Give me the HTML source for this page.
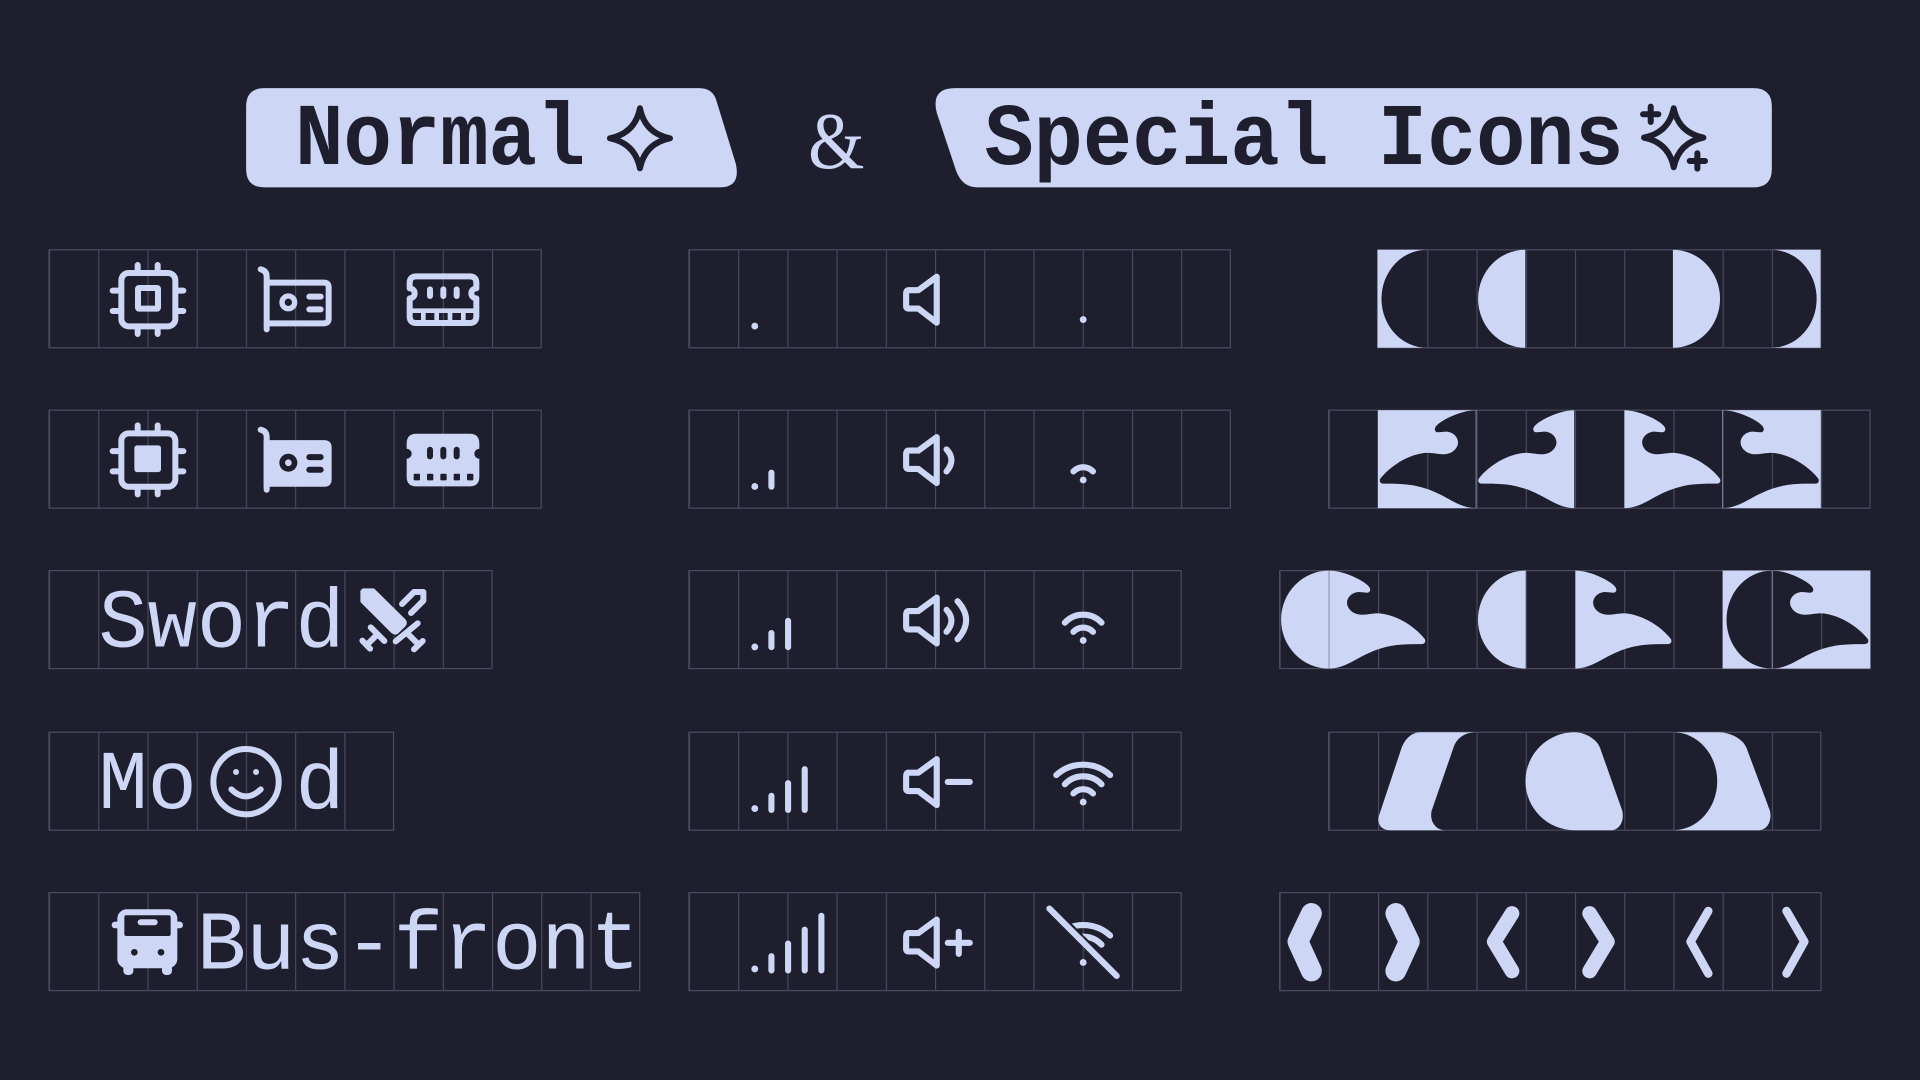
<!DOCTYPE html>
<html><head><meta charset="utf-8"><style>
html,body{margin:0;padding:0;background:#1e1e2e;overflow:hidden}
svg{display:block}
</style></head><body>
<svg width="1920" height="1080" viewBox="0 0 1568 882" xmlns="http://www.w3.org/2000/svg">
<defs>
<pattern id="gp" patternUnits="userSpaceOnUse" x="40" y="0" width="40.2" height="882">
<rect x="0" y="0" width="0.9" height="882" fill="#4a4b60"/>
</pattern>
<path id="w" d="M80,0 C74,0 66,2 58,6 C50,10 45,14 47,17 C48,19 52,17.5 56,17.5 C63,18 67,24 65,29 C63,34 58,36 53,36 C48,36 44,34.5 38,35 C22,37 8,48 2,56 C1,58 2,60 5,60 C15,60 26,60 36,63 C55,68 65,80 80,80 Z"/>
<mask id="m1" maskUnits="userSpaceOnUse" x="0" y="0" width="1568" height="882">
<rect x="0" y="0" width="1568" height="882" fill="#fff"/>
<use href="#w" transform="translate(1125.2,335)" fill="#000"/>
<use href="#w" transform="translate(1487,335) scale(-1,1)" fill="#000"/>
<path d="M1447,466 A37,40 0 0 0 1447,546 Z" fill="#000"/>
<use href="#w" transform="translate(1527.4,466) scale(-1,1)" fill="#000"/>
</mask>
<clipPath id="wc"><polygon points="821,700 918,797 960,797 960,700"/></clipPath>
</defs>
<rect width="1568" height="882" fill="#1e1e2e"/>

<!-- Titles -->
<path d="M216,72 H571 Q582,72 585,82 L601,134 Q605,153 588,153 H216 Q201,153 201,138 V87 Q201,72 216,72 Z" fill="#cdd6f4"/>
<path d="M1432,72 Q1447,72 1447,87 V138 Q1447,153 1432,153 H798 Q786,153 781,140 L765,92 Q760,72 780,72 Z" fill="#cdd6f4"/>
<g font-family="Liberation Mono, monospace" font-weight="bold" font-size="72" fill="#1e1e2e">
<text x="241" y="134" textLength="237" lengthAdjust="spacingAndGlyphs">Normal</text>
<text x="804" y="134" textLength="522" lengthAdjust="spacingAndGlyphs">Special Icons</text>
</g>
<text x="660" y="137" font-family="Liberation Serif, serif" font-size="66" fill="#cdd6f4" textLength="46" lengthAdjust="spacingAndGlyphs">&amp;</text>
<g transform="translate(481.8,65.3) scale(0.27222)" fill="none" stroke="#1e1e2e" stroke-width="18" stroke-linejoin="round" stroke-linecap="round">
<path d="M150,85 Q165,160 240,175 Q165,190 150,265 Q135,190 60,175 Q135,160 150,85 Z"/>
</g>
<g transform="translate(1306.7,65.3) scale(0.27222)" fill="none" stroke="#1e1e2e" stroke-width="18" stroke-linejoin="round" stroke-linecap="round">
<path d="M221,85 Q236,158 310,173 Q236,188 221,262 Q206,188 132,173 Q206,158 221,85 Z"/>
<path d="M152,80 V126 M129,103 H175 M292,220 V266 M269,243 H315"/>
</g>

<!-- Grids -->
<g fill="url(#gp)" stroke="#4a4b60" stroke-width="1">
<rect x="40" y="204" width="402" height="80"/>
<rect x="40" y="335" width="402" height="80"/>
<rect x="40" y="466" width="361.8" height="80"/>
<rect x="40" y="598" width="281.4" height="80"/>
<rect x="40" y="729" width="482.4" height="80"/>
<rect x="562.6" y="204" width="442.2" height="80"/>
<rect x="562.6" y="335" width="442.2" height="80"/>
<rect x="562.6" y="466" width="402" height="80"/>
<rect x="562.6" y="598" width="402" height="80"/>
<rect x="562.6" y="729" width="402" height="80"/>
<rect x="1125" y="204" width="361.8" height="80"/>
<rect x="1085" y="335" width="442.2" height="80"/>
<rect x="1045" y="466" width="482.4" height="80"/>
<rect x="1085" y="598" width="402" height="80"/>
<rect x="1045" y="729" width="442.2" height="80"/>
</g>

<!-- Left icons row1 (outline) -->
<g transform="translate(81.67,204.16) scale(0.27222)" fill="none" stroke="#cdd6f4" stroke-width="18" stroke-linecap="round" stroke-linejoin="round">
<rect x="64" y="69" width="162" height="160" rx="22"/>
<path d="M113,45 V69 M173,45 V69 M113,229 V252 M173,229 V252 M38,122 H64 M38,183 H64 M226,122 H250 M226,183 H250"/>
<rect x="114" y="114" width="60" height="62" rx="3"/>
<path d="M482,58 Q500,62 500,80 V238"/>
<path d="M500,98 H672 Q686,98 686,112 V206 Q686,220 672,220 H500"/>
<circle cx="565" cy="157" r="19" stroke-width="16"/>
<path d="M628,140 H662 M628,178 H662"/>
<path d="M949,79 H1109 Q1129,79 1129,99 V115 A15,15 0 0 0 1129,145 V199 Q1129,219 1109,219 H949 Q929,219 929,199 V145 A15,15 0 0 0 929,115 V99 Q929,79 949,79 Z"/>
<path d="M990,118 V138 M1030,118 V138 M1070,118 V138"/>
<path d="M929,182 H1129 M970,182 V219 M1010,182 V219 M1050,182 V219 M1090,182 V219" stroke-width="14"/>
</g>
<!-- Left icons row2 (filled) -->
<g transform="translate(81.67,335.16) scale(0.27222)" stroke-linecap="round" stroke-linejoin="round">
<g fill="none" stroke="#cdd6f4" stroke-width="18">
<rect x="64" y="69" width="162" height="160" rx="22"/>
<path d="M113,45 V69 M173,45 V69 M113,229 V252 M173,229 V252 M38,122 H64 M38,183 H64 M226,122 H250 M226,183 H250"/>
<path d="M482,58 Q500,62 500,80 V238"/>
</g>
<rect x="103" y="105" width="80" height="80" rx="8" fill="#cdd6f4"/>
<path d="M491,89 H672 Q695,89 695,112 V206 Q695,229 672,229 H491 Z" fill="#cdd6f4"/>
<circle cx="565" cy="157" r="27" fill="#1e1e2e"/>
<circle cx="565" cy="157" r="10" fill="#cdd6f4"/>
<path d="M628,140 H662 M628,178 H662" stroke="#1e1e2e" stroke-width="18"/>
<path d="M949,70 H1109 Q1138,70 1138,99 V115 A15,15 0 0 0 1138,145 V199 Q1138,228 1109,228 H949 Q920,228 920,199 V145 A15,15 0 0 0 920,115 V99 Q920,70 949,70 Z" fill="#cdd6f4"/>
<path d="M990,118 V138 M1030,118 V138 M1070,118 V138" stroke="#1e1e2e" stroke-width="18"/>
<g fill="#1e1e2e"><rect x="941" y="190" width="19" height="20" rx="3"/><rect x="981" y="190" width="19" height="20" rx="3"/><rect x="1021" y="190" width="19" height="20" rx="3"/><rect x="1061" y="190" width="19" height="20" rx="3"/><rect x="1101" y="190" width="19" height="20" rx="3"/></g>
</g>

<!-- Text labels -->
<g font-family="Liberation Mono, monospace" font-size="68" fill="#cdd6f4">
<text x="80.4" y="528" textLength="201" lengthAdjust="spacingAndGlyphs">Sword</text>
<text x="80.4" y="660" textLength="80.4" lengthAdjust="spacingAndGlyphs">Mo</text>
<text x="241.2" y="660" textLength="40.2" lengthAdjust="spacingAndGlyphs">d</text>
<text x="160.8" y="791" textLength="361.8" lengthAdjust="spacingAndGlyphs">Bus-front</text>
</g>
<!-- Sword icon -->
<g transform="translate(277.7,465.5) scale(0.27222)" stroke="#cdd6f4" stroke-linecap="round" stroke-linejoin="round">
<path d="M70,60 L100,60 L193,152 Q198,160 191,167 L172,186 Q165,192 157,185 L66,94 L66,64 Z" fill="#cdd6f4" stroke-width="10"/>
<g fill="none" stroke-width="18">
<path d="M92,172 L133,213 M112,193 L82,223 M67,212 L90,236"/>
<path d="M186,102 L222,66 L250,66 L250,92 L213,129"/>
<path d="M167,214 L233,160 M200,188 L235,223 M222,238 L248,213"/>
</g>
</g>
<!-- Smiley -->
<g transform="translate(155.2,596.2) scale(0.27222)" fill="none" stroke="#cdd6f4" stroke-width="18" stroke-linecap="round">
<circle cx="168" cy="155" r="98"/>
<path d="M124,178 Q168,220 212,178"/>
<circle cx="138" cy="126" r="9" fill="#cdd6f4" stroke="none"/>
<circle cx="198" cy="126" r="9" fill="#cdd6f4" stroke="none"/>
</g>
<!-- Bus -->
<g transform="translate(81.67,726.8) scale(0.27222)">
<rect x="35" y="95" width="30" height="20" rx="10" fill="#cdd6f4"/>
<rect x="219" y="95" width="30" height="20" rx="10" fill="#cdd6f4"/>
<rect x="70" y="215" width="30" height="40" rx="12" fill="#cdd6f4"/>
<rect x="186" y="215" width="30" height="40" rx="12" fill="#cdd6f4"/>
<rect x="52" y="58" width="180" height="177" rx="28" fill="#cdd6f4"/>
<rect x="73" y="76" width="139" height="62" rx="6" fill="#1e1e2e"/>
<path d="M122,97 H164" stroke="#cdd6f4" stroke-width="18" stroke-linecap="round"/>
<circle cx="103" cy="187" r="10" fill="#1e1e2e"/>
<circle cx="183" cy="187" r="10" fill="#1e1e2e"/>
</g>

<!-- Middle icons -->
<g fill="none" stroke="#cdd6f4" stroke-width="5" stroke-linecap="round" stroke-linejoin="round">
<path d="M630,386 V397.5"/>
<path d="M630,517 V528.5 M643.6,507 V528.5"/>
<path d="M630,649.9 V661.5 M643.6,639.6 V661.5 M657.2,628.2 V661.5"/>
<path d="M630,780.9 V792.5 M643.6,770.6 V792.5 M657.2,759.2 V792.5 M670.8,747.9 V792.5"/>
<path d="M765,226 L750,237 H742 Q740,237 740,240 V250 Q740,252 742,252 H750 L765,263.5 Z"/>
<path d="M765,357 L750,368 H742 Q740,368 740,371 V381 Q740,383 742,383 H750 L765,394.5 Z"/>
<path d="M765,488 L750,499 H742 Q740,499 740,502 V512 Q740,514 742,514 H750 L765,525.5 Z"/>
<path d="M765,620 L750,631 H742 Q740,631 740,634 V644 Q740,646 742,646 H750 L765,657.5 Z"/>
<path d="M765,751 L750,762 H742 Q740,762 740,765 V775 Q740,777 742,777 H750 L765,788.5 Z"/>
<path d="M773,367 Q781,375.5 773,385"/>
<path d="M773,498 Q781,506.5 773,516 M782,491 Q796,506.5 782,522"/>
<path d="M774,638.6 H792"/>
<path d="M774,770 H792 M783,761 V779"/>
<path d="M876.6,385 A10.9,10.9 0 0 1 892.6,385"/>
<path d="M876.6,516 A10.9,10.9 0 0 1 892.6,516 M869.6,508.5 A20.5,20.5 0 0 1 899.6,508.5"/>
<path d="M876.6,648 A10.9,10.9 0 0 1 892.6,648 M869.6,640.5 A20.5,20.5 0 0 1 899.6,640.5 M862.6,633 A32.7,32.7 0 0 1 906.6,633"/>
<g clip-path="url(#wc)"><path d="M869.6,771.5 A20.5,20.5 0 0 1 899.6,771.5 M862.6,764 A32.7,32.7 0 0 1 906.6,764"/></g>
<path d="M857,742 L912,797"/>
</g>
<g fill="#cdd6f4">
<circle cx="616.4" cy="266.3" r="2.8"/><circle cx="616.4" cy="397.3" r="2.8"/><circle cx="616.4" cy="528.3" r="2.8"/><circle cx="616.4" cy="660.3" r="2.8"/><circle cx="616.4" cy="791.3" r="2.8"/>
<circle cx="884.6" cy="261" r="2.8"/><circle cx="884.6" cy="392" r="2.8"/><circle cx="884.6" cy="523" r="2.8"/><circle cx="884.6" cy="655" r="2.8"/><circle cx="884.6" cy="786" r="2.8"/>
</g>

<!-- Right special shapes -->
<g fill="#cdd6f4" fill-rule="evenodd">
<path d="M1125,204 H1165.2 V284 H1125 Z M1165.2,204 A37,40 0 0 0 1165.2,284 Z"/>
<path d="M1245.6,204 A38.5,40 0 0 0 1245.6,284 Z"/>
<path d="M1366.2,204 A38.5,40 0 0 1 1366.2,284 Z"/>
<path d="M1446.6,204 H1486.8 V284 H1446.6 Z M1446.6,204 A37,40 0 0 1 1446.6,284 Z"/>
</g>
<g fill="#cdd6f4">
<rect x="1125.2" y="335" width="80.4" height="80" mask="url(#m1)"/>
<use href="#w" transform="translate(1205.6,335)"/>
<use href="#w" transform="translate(1406.6,335) scale(-1,1)"/>
<rect x="1406.6" y="335" width="80.4" height="80" mask="url(#m1)"/>
<path d="M1085.2,466 A39,40 0 0 0 1085.2,546 Z"/>
<use href="#w" transform="translate(1165.6,466) scale(-1,1)"/>
<path d="M1246,466 A39,40 0 0 0 1246,546 Z"/>
<use href="#w" transform="translate(1366.6,466) scale(-1,1)"/>
<rect x="1406.8" y="466" width="120.6" height="80" mask="url(#m1)"/>
<path transform="translate(1125.2,598)" d="M35,0 H80 C70,0 64,6 62,12 L44,64 C42,72 47,80 55,80 H10 C3,80 -1,75 1,68 L19,14 C22,5 28,0 35,0 Z"/>
<path transform="translate(1245.8,598)" d="M40,0 C48,0 58,5 61,13 L79,64 C81,72 77,80 70,80 H40 A40,40 0 0 1 40,0 Z"/>
<path transform="translate(1366.4,598)" d="M0,0 H37 C46,0 57,5 60,13 L79,64 C81,72 77,80 70,80 H0 A36,40 0 0 0 0,0 Z"/>
</g>
<g fill="none" stroke="#cdd6f4" stroke-linecap="round" stroke-linejoin="round">
<path transform="translate(1045,729)" d="M26,17 L15,40 L26,64" stroke-width="17"/>
<path transform="translate(1125.4,729)" d="M14.5,17 L25.5,40 L14.5,64" stroke-width="17"/>
<path transform="translate(1205.8,729)" d="M29,17 L14.5,40 L29,64" stroke-width="12"/>
<path transform="translate(1286.2,729)" d="M12,17 L26.5,40 L12,64" stroke-width="12"/>
<path transform="translate(1366.6,729)" d="M28.5,15 L14,40 L28.5,66" stroke-width="7"/>
<path transform="translate(1447,729)" d="M12,15 L26.5,40 L12,66" stroke-width="7"/>
</g>
</svg>
</body></html>
